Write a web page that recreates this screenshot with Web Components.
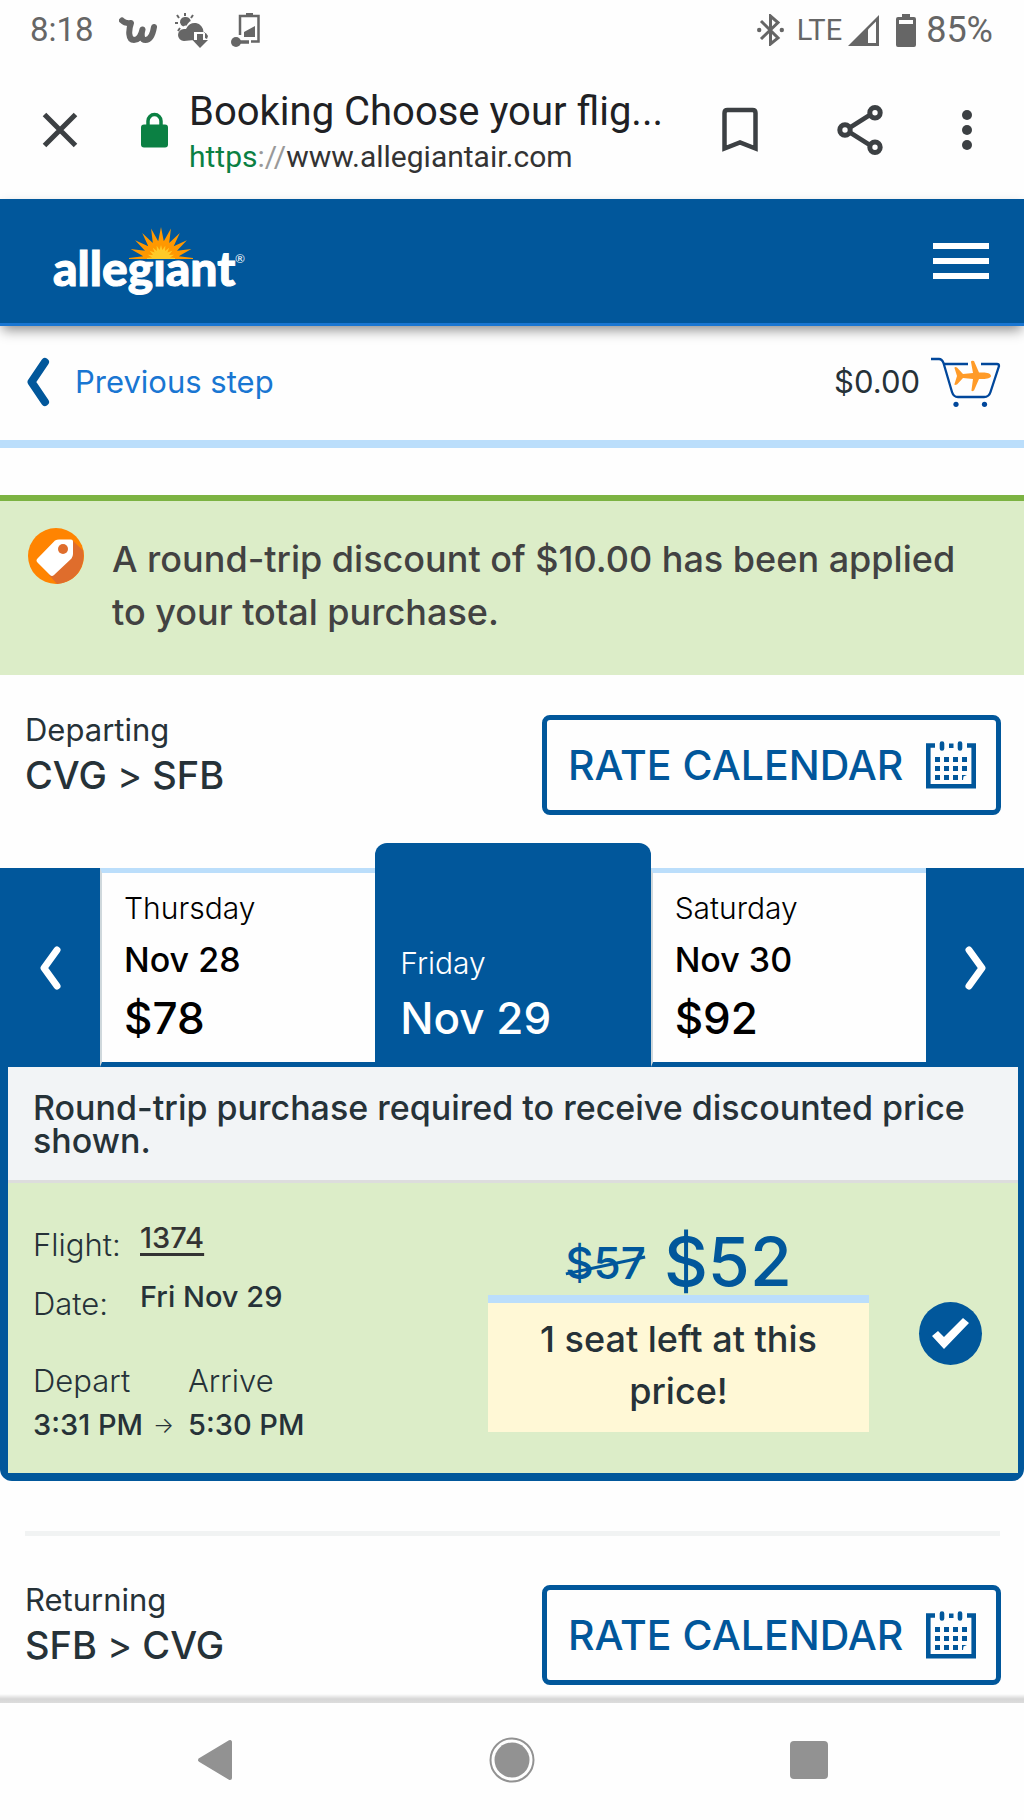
<!DOCTYPE html>
<html lang="en">
<head>
<meta charset="utf-8">
<meta name="viewport" content="width=device-width, initial-scale=1">
<title>Booking Choose your flights</title>
<style>
  body {
    margin: 0;
    background: #fefefe;
    color: #263238;
    font-family: Inter, "Open Sans", sans-serif;
    --brand: #01579b;
    --sky: #bbdefb;
    --leaf: #dcedc8;
  }
</style>
</head>
<body>
<booking-page></booking-page>

<script>
const define = (name, html) => {
  const template = document.createElement('template');
  template.innerHTML = `<style>
    *, *::before, *::after { box-sizing: border-box; }
    :host { display: block; }
    svg { display: block; flex: none; }
    button { font: inherit; color: inherit; background: none; border: 0; padding: 0; margin: 0; cursor: pointer; }
    p, h1, h2, dl, dd, dt { margin: 0; font: inherit; }
  </style>` + html;
  customElements.define(name, class extends HTMLElement {
    constructor() {
      super();
      this.attachShadow({ mode: 'open' }).append(template.content.cloneNode(true));
    }
  });
};

define('status-bar', `
<style>
  :host { display: flex; align-items: center; justify-content: space-between; height: 60px; padding: 0 31px 0 30px; color: #666; font: 400 33px/40px Roboto, sans-serif; }
  .group { display: flex; align-items: center; }
  .notes { gap: 18px; }
  .time { margin-right: 7px; }
  .lte { font-size: 29px; margin: 0 6px 0 13px; }
  .battery { margin: 0 10px 0 17px; }
  .charge { font-size: 36px; }
</style>
<div class="group notes">
  <span class="time">8:18</span>
  <svg width="38" height="27" viewBox="0 0 38 27" fill="none" stroke="#666" stroke-width="6" stroke-linecap="round" stroke-linejoin="round"><path d="M3 3.500 C6 6.500 9 6.500 12 6 C9.500 13 9 23 15 23 C20 23 22.500 17 23.500 12.500 C22 18 22.500 23 26.500 23 C31.500 23 34 16 35 10"/></svg>
  <svg width="33" height="36" viewBox="0 0 33 36" fill="#666"><g stroke="#666" stroke-width="2"><path d="M10 4V1M4 6 2 3M16 6l2-3M3 11H0M5 16l-2 3"/></g><path d="M5 10.500a5.500 5.500 0 0 1 10.800-1.500c-2 1-3.200 2.500-4 4.500-1.500 0-2.600.3-3.600 1A5.500 5.500 0 0 1 5 10.500z"/><path d="M9 29a6 6 0 0 1 0-12h2a9 9 0 0 1 17.500 3A6.500 6.500 0 0 1 33 24l-1 3-2-1v-6H19v8z"/><path d="M22 22h6v6h5l-8 8-7.500-8H22z"/></svg>
  <svg width="35" height="36" viewBox="-5 0 35 36"><path d="M9 23V4h18.500v25.500H20" fill="none" stroke="#666" stroke-width="2.500"/><path d="M15 1h7v3h-7zM13 25V20L24 14v11z" fill="#666"/><circle cx="5" cy="30" r="5" fill="#666"/><path d="M5 30h13" stroke="#666" stroke-width="3.500"/></svg>
</div>
<div class="group">
  <svg width="27" height="32" viewBox="0 0 27 32" fill="none" stroke="#666" stroke-width="3"><path d="M4 7l17 17-7.500 6V2L21 8.500 4 25"/><circle cx="2.200" cy="16" r="2.200" fill="#666" stroke="none"/><circle cx="24.800" cy="16" r="2.200" fill="#666" stroke="none"/></svg>
  <span class="lte">LTE</span>
  <svg width="31" height="31" viewBox="0 0 31 31"><path d="M31 0v31H0z" fill="#666"/><path d="M20 14.500l8-8V28h-8z" fill="#fefefe"/></svg>
  <svg class="battery" width="20" height="33" viewBox="0 0 20 33"><path d="M6 0h8v3H6zM2 3h16q2 0 2 2v26q0 2-2 2H2q-2 0-2-2V5q0-2 2-2z" fill="#666"/><path d="M3 6h14v4H3z" fill="#fefefe"/></svg>
  <span class="charge">85%</span>
</div>`);

define('browser-bar', `
<style>
  :host { display: flex; align-items: center; height: 139px; padding: 0 52px 0 42px; font-family: Roboto, sans-serif; color: #202124; }
  .lock { margin: 0 21px 0 63px; }
  .page { flex: 1; min-width: 0; padding-top: 6px; }
  h1 { font-size: 40px; line-height: 48px; white-space: nowrap; }
  .url { font-size: 30px; line-height: 42px; color: #333; }
  .secure { color: #0b8043; } .sep { color: #999; }
  .tools { display: flex; align-items: center; gap: 79px; margin-left: 24px; }
</style>
<button aria-label="Close"><svg width="36" height="36" viewBox="0 0 36 36"><path d="M2.500 2.500l31 31M33.500 2.500l-31 31" stroke="#3c4043" stroke-width="5"/></svg></button>
<svg class="lock" width="27" height="36" viewBox="0 0 27 36"><path d="M7 15V9a6.500 6.500 0 0 1 13 0v6" fill="none" stroke="#0b8043" stroke-width="3.500"/><rect y="12.500" width="27" height="23" rx="3" fill="#0b8043"/></svg>
<div class="page">
  <h1>Booking Choose your flig...</h1>
  <p class="url"><span class="secure">https</span><span class="sep">://</span>www.allegiantair.com</p>
</div>
<div class="tools">
  <button aria-label="Bookmark"><svg width="36" height="46" viewBox="0 0 36 46"><path d="M2.500 41.500V6q0-3 3-3h25q3 0 3 3v35.500L18 35.500z" fill="none" stroke="#3c4043" stroke-width="4.500"/></svg></button>
  <button aria-label="Share"><svg width="46" height="50" viewBox="0 0 46 50" fill="none" stroke="#3c4043" stroke-width="4.500"><path d="M13 22.500l19-12M13 27.500l19 12"/><g stroke-width="5"><circle cx="8" cy="25" r="5.200"/><circle cx="38" cy="7.700" r="5.200"/><circle cx="38" cy="42.300" r="5.200"/></g></svg></button>
  <button aria-label="More"><svg width="10" height="40" viewBox="0 0 10 40" fill="#3c4043"><circle cx="5" cy="5" r="5"/><circle cx="5" cy="20" r="5"/><circle cx="5" cy="35" r="5"/></svg></button>
</div>`);

define('site-header', `
<style>
  :host { display: flex; align-items: center; justify-content: space-between; height: 127px; padding: 0 35px 0 53px; background: var(--brand); border-bottom: 3px solid #1976d2; box-shadow: 0 6px 12px -2px rgba(0,0,0,.45); position: relative; z-index: 1; }
  a { display: block; }
  button { display: grid; gap: 9px; width: 56px; }
  button i { height: 6px; background: #fff; }
  text { font-family: Lato, sans-serif; font-weight: 900; fill: #fff; stroke: #fff; }
</style>
<a href="#" aria-label="allegiant home">
  <svg width="196" height="78" viewBox="0 0 196 78">
    <text x="0" y="64" font-size="48" stroke-width="1">allegiant</text>
    <g id="sun"></g>
    <text x="182" y="41" font-size="12" style="font-weight:400;stroke:none">®</text>
  </svg>
</a>
<button aria-label="Menu"><i></i><i></i><i></i></button>`);

define('step-bar', `
<style>
  :host { display: flex; align-items: center; justify-content: space-between; height: 122px; padding: 0 23px 2px 26px; border-bottom: 8px solid var(--sky); font-size: 31px; line-height: 40px; }
  a { display: flex; align-items: center; gap: 25px; color: #1976d2; text-decoration: none; }
  .cart { display: flex; align-items: center; gap: 11px; }
</style>
<a href="#"><svg width="24" height="50" viewBox="0 0 24 50"><path d="M19 5L5.500 25 19 45" fill="none" stroke="#01579b" stroke-width="8" stroke-linecap="round" stroke-linejoin="round"/></svg>Previous step</a>
<div class="cart"><span>$0.00</span>
  <svg width="70" height="50" viewBox="0 0 70 50"><path d="M0 2h8q3 0 4.500 4L21 35q1.500 5 6 5h26q5 0 6.500-5l8.500-26q0-2-2-2H50M12.500 7H37" fill="none" stroke="#01479b" stroke-width="2.300"/><circle cx="25" cy="47.300" r="2.600" fill="#01479b"/><circle cx="53.500" cy="47.300" r="2.600" fill="#01479b"/><path d="M60 19c0 2-4 3-8 3h-4l-5 11.500q-3 1.500-2.500-.5L42 22l-10-1-6 6.500q-3 1-2.500-.5l2.500-8-2.500-8q0-1.500 2.500-.5l6 6.500 10-1L40 5q0-2 3-1l5 11.500h4c4 0 8 1 8 3.500z" fill="#ff9b28"/></svg>
</div>`);

define('discount-banner', `
<style>
  :host { display: flex; gap: 28px; margin-top: 47px; padding: 27px 28px 36px; background: var(--leaf); border-top: 6px solid #7cb342; color: #424242; font-weight: 500; font-size: 36px; line-height: 53px; }
  p { padding-top: 5px; flex: 1; }
</style>
<svg width="56" height="56" viewBox="0 0 56 56"><circle cx="28" cy="28" r="28" fill="#ff8401"/><path d="M44 12l11 10.500A28 28 0 0 1 29 56l-8-9z" fill="#df6d2c"/><path d="M27 12.500q2-1 4-1h12q2 0 2 2V26q0 2-1.500 4.500L26 47q-2 2-4 0L9.500 34.500q-2-2 0-4z" fill="#fff"/><circle cx="35" cy="21" r="5" fill="#df6d2c"/></svg>
<p><slot></slot></p>`);

define('leg-header', `
<style>
  :host { display: flex; align-items: flex-start; justify-content: space-between; padding: 35px 23px 0 25px; }
  .way { font-size: 31px; line-height: 40px; }
  .route { font-size: 38px; font-weight: 500; line-height: 50px; }
  .route ::slotted(*) { font-weight: 400; }
  button { display: flex; align-items: center; justify-content: space-between; gap: 12px; width: 459px; height: 100px; margin-top: 5px; padding: 0 20px 0 21px; border: 5px solid var(--brand); border-radius: 8px; color: var(--brand); font-size: 41px; font-weight: 500; line-height: 48px; white-space: nowrap; }
</style>
<div><p class="way"><slot name="way"></slot></p><h2 class="route"><slot></slot></h2></div>
<button>RATE CALENDAR
  <svg width="50" height="48" viewBox="0 0 50 48"><path d="M9 4.500H2.300v40.700h45.400V4.500H41" fill="none" stroke="#01579b" stroke-width="4.600"/><path d="M16 2.500v5M34 2.500v5" stroke="#01579b" stroke-width="4.600" stroke-linecap="round"/><path d="M23 2.500h4.500v4.500H23zM9 16h5v5H9zm9 0h5v5h-5zm9 0h5v5h-5zm9 0h5v5h-5zM9 25h5v5H9zm9 0h5v5h-5zm9 0h5v5h-5zm9 0h5v5h-5zM9 34h5v5H9zm9 0h5v5h-5zm9 0h5v5h-5zm9 0h5l-3.500 1.500L37 39h-1z" fill="#01579b"/></svg>
</button>`);

define('day-tab', `
<style>
  :host { display: block; }
  button { display: flex; flex-direction: column; align-items: flex-start; width: 100%; height: 199px; padding: 12px 0 0 22px; border: solid var(--brand); border-width: 5px 0; border-top-color: var(--sky); border-left: 2px solid #cfd8dc; color: #000; background: #fefefe; }
  .day { font-size: 30px; font-weight: 300; line-height: 47px; }
  .date { font-size: 34px; font-weight: 500; line-height: 56px; }
  .price { font-size: 44px; font-weight: 500; line-height: 60px; }
  :host([active]) button { height: 224px; padding: 0 0 19px 25px; justify-content: flex-end; border: 0; border-radius: 12px 12px 0 0; background: var(--brand); color: #fff; }
  :host([active]) .day { line-height: 50px; }
  :host([active]) .date { font-size: 44px; line-height: 60px; }
  :host([active]) .price { display: none; }
</style>
<button><span class="day"><slot name="day"></slot></span><span class="date"><slot></slot></span><span class="price"><slot name="price"></slot></span></button>`);

define('day-picker', `
<style>
  :host { display: grid; grid-template-columns: 100px 1fr 98px; align-items: end; margin-top: 28px; }
  .days { display: grid; grid-auto-flow: column; grid-auto-columns: 1fr; align-items: end; }
  .step { display: grid; place-items: center; height: 199px; background: var(--brand); }
</style>
<button class="step" aria-label="Earlier days"><svg width="22" height="44" viewBox="0 0 22 44"><path d="M18 4L5 22l13 18" fill="none" stroke="#fff" stroke-width="7" stroke-linecap="round" stroke-linejoin="round"/></svg></button>
<div class="days"><slot></slot></div>
<button class="step" aria-label="Later days"><svg width="22" height="44" viewBox="0 0 22 44"><path d="M5 4l13 18L5 40" fill="none" stroke="#fff" stroke-width="7" stroke-linecap="round" stroke-linejoin="round"/></svg></button>`);

define('flight-card', `
<style>
  :host { border: solid var(--brand); border-width: 0 6px 8px 8px; border-radius: 0 0 12px 12px; background: var(--brand); }
  .notice { padding: 24px 25px 23px; background: #f2f4f6; border-bottom: 3px solid #ddd; font-size: 34px; font-weight: 500; line-height: 33px; }
  .body { display: flex; align-items: center; padding: 29px 36px 26px 25px; background: var(--leaf); }
  .info { flex: 1; font-size: 31px; }
  .facts { display: grid; grid-template-columns: 107px 1fr; }
  dt { padding-top: 7px; font-weight: 300; line-height: 52px; }
  dd { font-weight: 500; line-height: 52px; font-size: 29px; }
  a { color: #333; text-underline-offset: 5px; text-decoration-thickness: 3px; }
  .times { display: grid; grid-template-columns: 106px 37px 1fr; column-gap: 6px; margin-top: 29px; line-height: 44px; font-weight: 300; white-space: nowrap; }
  .times b { font-weight: 500; font-size: 29px; }
  .to { font-size: 22px; text-align: center; }
  .fare { width: 381px; text-align: center; }
  .prices { display: flex; justify-content: center; align-items: flex-end; gap: 18px; color: var(--brand); font-weight: 500; }
  s { position: relative; font-size: 44px; line-height: 64px; text-decoration: none; }
  s::after { content: ""; position: absolute; left: 0; right: 0; top: 33px; height: 3px; background: var(--brand); transform: rotate(-12deg); }
  strong { font-size: 68px; line-height: 68px; font-weight: 500; }
  .seats { padding: 10px 20px 15px; border-top: 8px solid var(--sky); background: #fff8d6; font-size: 36px; font-weight: 500; line-height: 52px; }
  .seats p { max-width: 310px; margin: 0 auto; }
  label { margin: 8px 0 0 50px; }
  input { appearance: none; display: grid; width: 63px; height: 63px; margin: 0; border-radius: 50%; background: var(--brand); }
  input::before { content: ""; width: 37px; height: 31px; margin: 16px 13px; background: #fff; clip-path: polygon(0 18px, 6px 13px, 12px 19px, 31px 0, 37px 5px, 12px 31px); }
</style>
<p class="notice">Round-trip purchase required to receive discounted price shown.</p>
<div class="body">
  <div class="info">
    <dl class="facts"><dt>Flight:</dt><dd><a href="#">1374</a></dd><dt>Date:</dt><dd>Fri Nov 29</dd></dl>
    <div class="times"><span>Depart</span><span></span><span>Arrive</span><b>3:31 PM</b><span class="to">→</span><b>5:30 PM</b></div>
  </div>
  <div class="fare">
    <div class="prices"><s>$57</s><strong>$52</strong></div>
    <div class="seats"><p>1 seat left at this price!</p></div>
  </div>
  <label><input type="radio" name="flight" checked aria-label="Flight 1374"></label>
</div>`);

define('system-nav', `
<style>
  :host { display: grid; grid-template-columns: repeat(3, 1fr); place-items: center; height: 126px; margin-top: auto; padding: 9px 66px 3px; background: linear-gradient(#fefefe 0, #d6d6d6 5px, #dcdcdc 9px, #fefefe 9px); }
</style>
<button aria-label="Back"><svg width="36" height="42" viewBox="0 0 36 42"><path d="M3 21L33 3v36z" fill="#929292" stroke="#929292" stroke-width="4" stroke-linejoin="round"/></svg></button>
<button aria-label="Home"><svg width="46" height="46" viewBox="0 0 46 46"><circle cx="23" cy="23" r="21.500" fill="none" stroke="#929292" stroke-width="2"/><circle cx="23" cy="23" r="17.500" fill="#929292"/></svg></button>
<button aria-label="Recent apps"><svg width="38" height="38"><rect width="38" height="38" rx="4" fill="#929292"/></svg></button>`);

define('booking-page', `
<style>
  :host { display: flex; flex-direction: column; min-height: 100vh; }
  hr { height: 5px; margin: 50px 24px 9px 25px; border: 0; background: #f1f3f3; }
  system-nav { flex: none; }
</style>
<status-bar></status-bar>
<browser-bar></browser-bar>
<site-header></site-header>
<step-bar></step-bar>
<discount-banner>A round-trip discount of $10.00 has been applied to your total purchase.</discount-banner>
<leg-header><span slot="way">Departing</span>CVG <span>&gt;</span> SFB</leg-header>
<day-picker>
  <day-tab><span slot="day">Thursday</span>Nov 28<span slot="price">$78</span></day-tab>
  <day-tab active><span slot="day">Friday</span>Nov 29</day-tab>
  <day-tab><span slot="day">Saturday</span>Nov 30<span slot="price">$92</span></day-tab>
</day-picker>
<flight-card></flight-card>
<hr>
<leg-header><span slot="way">Returning</span>SFB <span>&gt;</span> CVG</leg-header>
<system-nav></system-nav>`);

// Half-disc of pointed rays that rises over the wordmark.
const rays = (cx, cy, inner, outer, count, fill) => {
  let d = `M${cx - outer} ${cy}L${cx - outer} ${cy - 1}`;
  for (let i = 1; i < count * 2; i++) {
    const angle = Math.PI - (Math.PI * i) / (count * 2);
    const r = i % 2 ? inner : outer;
    d += `L${(cx + r * Math.cos(angle)).toFixed(1)} ${(cy - r * Math.sin(angle)).toFixed(1)}`;
  }
  return `<path d="${d}L${cx + outer} ${cy - 1}V${cy}z" fill="${fill}"/>`;
};
const header = document.querySelector('booking-page').shadowRoot.querySelector('site-header');
header.shadowRoot.querySelector('#sun').innerHTML =
  rays(108, 37, 18, 32, 10, '#ff9800') + rays(108, 37, 9, 14, 10, '#ffca28');
</script>
</body>
</html>
